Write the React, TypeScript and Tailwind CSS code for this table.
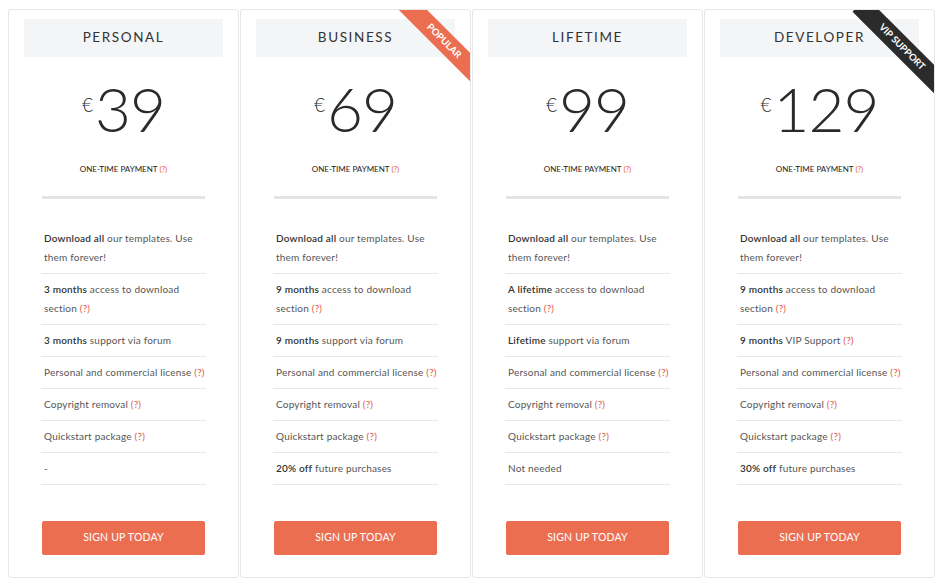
import React from 'react';

type Plan = {
  name: string;
  price: string;
  ribbon?: { text: string; color: string; pos: string };
  features: React.ReactNode[];
};

const Q = () => <span className="text-[#e0574a]">(?)</span>;

const plans: Plan[] = [
  {
    name: 'PERSONAL',
    price: '39',
    features: [
      <><b className="font-semibold text-[#333]">Download all</b> our templates. Use them forever!</>,
      <><b className="font-semibold text-[#333]">3 months</b> access to download section <Q /></>,
      <><b className="font-semibold text-[#333]">3 months</b> support via forum</>,
      <>Personal and commercial license <Q /></>,
      <>Copyright removal <Q /></>,
      <>Quickstart package <Q /></>,
      <>-</>,
    ],
  },
  {
    name: 'BUSINESS',
    price: '69',
    ribbon: { text: 'POPULAR', color: 'bg-[#ec6e50]', pos: 'left-[143px] top-[21px]' },
    features: [
      <><b className="font-semibold text-[#333]">Download all</b> our templates. Use them forever!</>,
      <><b className="font-semibold text-[#333]">9 months</b> access to download section <Q /></>,
      <><b className="font-semibold text-[#333]">9 months</b> support via forum</>,
      <>Personal and commercial license <Q /></>,
      <>Copyright removal <Q /></>,
      <>Quickstart package <Q /></>,
      <><b className="font-semibold text-[#333]">20% off</b> future purchases</>,
    ],
  },
  {
    name: 'LIFETIME',
    price: '99',
    features: [
      <><b className="font-semibold text-[#333]">Download all</b> our templates. Use them forever!</>,
      <><b className="font-semibold text-[#333]">A lifetime</b> access to download section <Q /></>,
      <><b className="font-semibold text-[#333]">Lifetime</b> support via forum</>,
      <>Personal and commercial license <Q /></>,
      <>Copyright removal <Q /></>,
      <>Quickstart package <Q /></>,
      <>Not needed</>,
    ],
  },
  {
    name: 'DEVELOPER',
    price: '129',
    ribbon: { text: 'VIP SUPPORT', color: 'bg-[#2b2b2b]', pos: 'left-[137px] top-[27px]' },
    features: [
      <><b className="font-semibold text-[#333]">Download all</b> our templates. Use them forever!</>,
      <><b className="font-semibold text-[#333]">9 months</b> access to download section <Q /></>,
      <><b className="font-semibold text-[#333]">9 months</b> VIP Support <Q /></>,
      <>Personal and commercial license <Q /></>,
      <>Copyright removal <Q /></>,
      <>Quickstart package <Q /></>,
      <><b className="font-semibold text-[#333]">30% off</b> future purchases</>,
    ],
  },
];

const Card: React.FC<{ plan: Plan }> = ({ plan }) => (
  <div className="relative w-[231px] h-[569px] bg-white border border-[#e6e6e6] rounded-[3px] overflow-hidden flex flex-col">
    {plan.ribbon && (
      <div
        className={`absolute ${plan.ribbon.pos} w-[120px] h-[20px] rotate-45 ${plan.ribbon.color} text-white text-[9.5px] font-bold flex items-center justify-center`}
      >
        {plan.ribbon.text}
      </div>
    )}
    <div className="mx-[15px] mt-[9px] h-[38px] pb-[1px] bg-[#f4f5f7] flex items-center justify-center text-[13.5px] tracking-[1.6px] text-[#333]">
      {plan.name}
    </div>
    <div className="mt-[25px] h-[52px] flex items-start justify-center text-[#2a2a2a]">
      <span className="text-[19px] font-light mt-[9px] mr-[2px]">€</span>
      <span className="text-[62px] leading-[52px] font-light tracking-[-1px]">{plan.price}</span>
    </div>
    <div className="mt-[29px] text-center text-[8px] text-[#222] uppercase">
      One-time payment <Q />
    </div>
    <div className="mx-[33px] mt-[21px] h-[3px] bg-[#e4e4e4]" />
    <ul className="mx-[32px] mt-[24px] text-[10px] tracking-[0.2px] leading-[19px] text-[#555]">
      {plan.features.map((f, i) => (
        <li key={i} className="py-[6px] pl-[3px] pr-[1px] border-b border-[#e8e8e8]">
          {f}
        </li>
      ))}
    </ul>
    <button className="mx-[33px] mt-[36px] h-[34px] bg-[#ec6e50] rounded-[2px] text-white text-[10.5px] tracking-[0.2px]">
      SIGN UP TODAY
    </button>
  </div>
);

export default function App() {
  return (
    <div className="w-[942px] h-[586px] bg-white pl-[8px] pt-[9px] flex gap-[1px] font-['Lato',sans-serif]">
      {plans.map((p) => (
        <Card key={p.name} plan={p} />
      ))}
    </div>
  );
}
